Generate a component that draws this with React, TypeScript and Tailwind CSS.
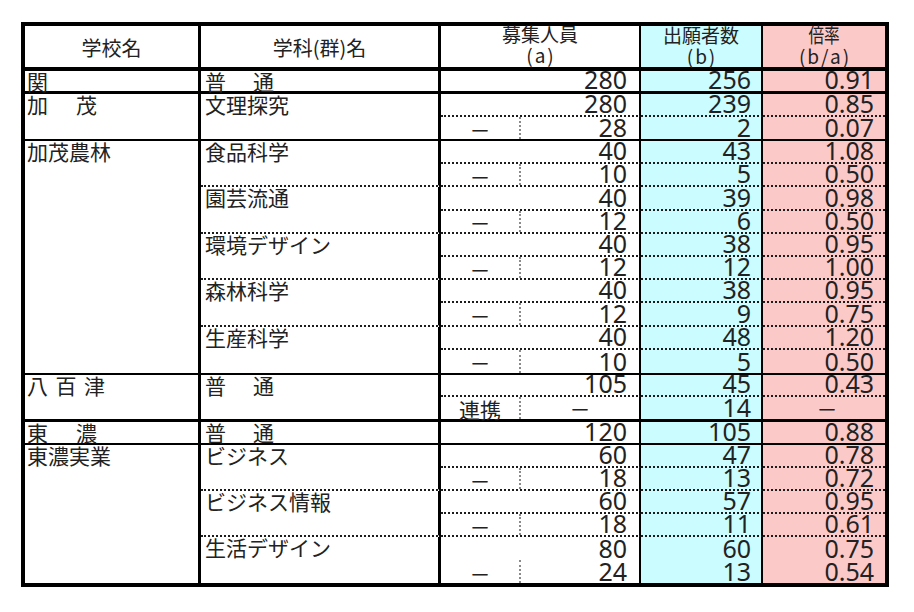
import React from 'react';

type Row = { a: string; b: string; r: string; sub?: boolean; label?: string };
type Dept = { name: React.ReactNode; rows: Row[]; joined?: boolean };
type School = { name: React.ReactNode; box: string; depts: Dept[] };

const jp = "font-['Noto_Sans_CJK_JP','Noto_Sans',sans-serif]";
const num = "font-['Noto_Sans','Noto_Sans_CJK_JP',sans-serif] text-[25px] leading-[20px]";
const dotB = 'border-b-2 [border-bottom-style:dotted] border-b-[#1c1c1c]';
const rowsCls: Record<number, string> = { 1: 'grid-rows-1', 2: 'grid-rows-2', 3: 'grid-rows-3', 5: 'grid-rows-5' };

const futsu = (
  <>
    普<span className="ml-[27px]">通</span>
  </>
);

const schools: School[] = [
  {
    name: '関',
    box: 'h-[23px] border-b-[3px]',
    depts: [{ name: futsu, rows: [{ a: '280', b: '256', r: '0.91' }] }],
  },
  {
    name: (
      <>
        加<span className="ml-[28px]">茂</span>
      </>
    ),
    box: 'h-[47px] border-b-2',
    depts: [
      {
        name: '文理探究',
        rows: [
          { a: '280', b: '239', r: '0.85' },
          { a: '28', b: '2', r: '0.07', sub: true },
        ],
      },
    ],
  },
  {
    name: '加茂農林',
    box: 'h-[234px] border-b-2',
    depts: [
      { name: '食品科学', rows: [{ a: '40', b: '43', r: '1.08' }, { a: '10', b: '5', r: '0.50', sub: true }] },
      { name: '園芸流通', rows: [{ a: '40', b: '39', r: '0.98' }, { a: '12', b: '6', r: '0.50', sub: true }] },
      { name: '環境デザイン', rows: [{ a: '40', b: '38', r: '0.95' }, { a: '12', b: '12', r: '1.00', sub: true }] },
      { name: '森林科学', rows: [{ a: '40', b: '38', r: '0.95' }, { a: '12', b: '9', r: '0.75', sub: true }] },
      { name: '生産科学', rows: [{ a: '40', b: '48', r: '1.20' }, { a: '10', b: '5', r: '0.50', sub: true }] },
    ],
  },
  {
    name: <span className="tracking-[7.5px]">八百津</span>,
    box: 'h-[47px] border-b-[3px]',
    depts: [
      {
        name: futsu,
        rows: [
          { a: '105', b: '45', r: '0.43' },
          { a: '－', b: '14', r: '－', sub: true, label: '連携' },
        ],
      },
    ],
  },
  {
    name: (
      <>
        東<span className="ml-[28px]">濃</span>
      </>
    ),
    box: 'h-[23px] border-b-2',
    depts: [{ name: futsu, rows: [{ a: '120', b: '105', r: '0.88' }] }],
  },
  {
    name: '東濃実業',
    box: 'h-[138px]',
    depts: [
      { name: 'ビジネス', rows: [{ a: '60', b: '47', r: '0.78' }, { a: '18', b: '13', r: '0.72', sub: true }] },
      { name: 'ビジネス情報', rows: [{ a: '60', b: '57', r: '0.95' }, { a: '18', b: '11', r: '0.61', sub: true }] },
      {
        name: '生活デザイン',
        joined: true,
        rows: [{ a: '80', b: '60', r: '0.75' }, { a: '24', b: '13', r: '0.54', sub: true }],
      },
    ],
  },
];

const Dash = () => <span className={`${jp} text-[21px] leading-[20px]`}>－</span>;

const DataRow: React.FC<{ row: Row; line: boolean }> = ({ row, line }) => {
  const l = line ? dotB : '';
  return (
    <div className="flex min-h-0">
      {/* 募集人員 */}
      <div className={`flex w-[200px] border-r-2 border-r-black ${l}`}>
        {row.sub && (
          <div
            className={`flex w-[80px] justify-center border-r-2 [border-right-style:dotted] border-r-[#8a8a8a] ${
              row.label ? 'items-end' : 'items-center pt-[2px]'
            } ${jp} text-[21px] leading-[20px]`}
          >
            {row.label ?? '－'}
          </div>
        )}
        {row.a === '－' ? (
          <div className="flex flex-1 items-center justify-center">
            <Dash />
          </div>
        ) : (
          <div className="flex flex-1 items-end justify-end pb-[2px] pr-[12px]">
            <span className={num}>{row.a}</span>
          </div>
        )}
      </div>
      {/* 出願者数 */}
      <div className={`flex w-[122px] items-end justify-end border-r-2 border-r-black bg-[#cbfcff] pb-[2px] pr-[10px] ${l}`}>
        <span className={num}>{row.b}</span>
      </div>
      {/* 倍率 */}
      {row.r === '－' ? (
        <div className={`flex w-[122px] items-center justify-center bg-[#fcc9c9] pl-[6px] ${l}`}>
          <Dash />
        </div>
      ) : (
        <div className={`flex w-[122px] items-end justify-end bg-[#fcc9c9] pb-[2px] pr-[11px] ${l}`}>
          <span className={num}>{row.r}</span>
        </div>
      )}
    </div>
  );
};

const DeptBlock: React.FC<{ dept: Dept; last: boolean }> = ({ dept, last }) => (
  <div className="flex min-h-0">
    <div className={`w-[240px] border-r-[3px] border-r-black pl-[4px] ${jp} text-[21px] leading-[20px] ${last ? '' : dotB}`}>
      {dept.name}
    </div>
    <div className={`grid flex-1 ${rowsCls[dept.rows.length]}`}>
      {dept.rows.map((row, i) => {
        const isLast = i === dept.rows.length - 1;
        const line = isLast ? !last : !dept.joined;
        return <DataRow key={i} row={row} line={line} />;
      })}
    </div>
  </div>
);

export default function App() {
  return (
    <div className="min-h-[612px] w-[914px] bg-white pl-[21px] pt-[22px] text-[#222]">
      <div className="w-[868px] border-4 border-black">
        {/* header */}
        <div className={`flex h-[45px] border-b-4 border-black ${jp}`}>
          <div className="flex w-[176px] items-center justify-center border-r-[3px] border-black pt-[2px] text-[20px] leading-[20px]">
            学校名
          </div>
          <div className="flex w-[240px] items-center justify-center border-r-[3px] border-black pt-[2px] text-[20px] leading-[20px]">
            学科(群)名
          </div>
          <div className="flex w-[200px] flex-col items-center border-r-2 border-black text-[19px] leading-[21px]">
            <span className="-mt-[3px]">募集人員</span>
            <span className="pl-[2px] tracking-[2px]">(a)</span>
          </div>
          <div className="flex w-[122px] flex-col items-center border-r-2 border-black bg-[#cbfcff] text-[19px] leading-[21px]">
            <span className="-mt-[2px]">出願者数</span>
            <span className="pl-[2px] tracking-[2px]">(b)</span>
          </div>
          <div className="flex w-[122px] flex-col items-center bg-[#fcc9c9] text-[19px] leading-[21px]">
            <span className="-mt-[2px] inline-block text-[20px] [transform:scaleX(0.78)]">倍率</span>
            <span className="pl-[2px] tracking-[2px]">(b/a)</span>
          </div>
        </div>

        {/* body */}
        {schools.map((s, si) => (
          <div key={si} className={`flex border-black ${s.box}`}>
            <div className={`w-[176px] border-r-[3px] border-black pl-[2px] ${jp} text-[21px] leading-[20px]`}>{s.name}</div>
            <div className={`grid flex-1 ${rowsCls[s.depts.length]}`}>
              {s.depts.map((d, di) => (
                <DeptBlock key={di} dept={d} last={di === s.depts.length - 1} />
              ))}
            </div>
          </div>
        ))}
      </div>
    </div>
  );
}
